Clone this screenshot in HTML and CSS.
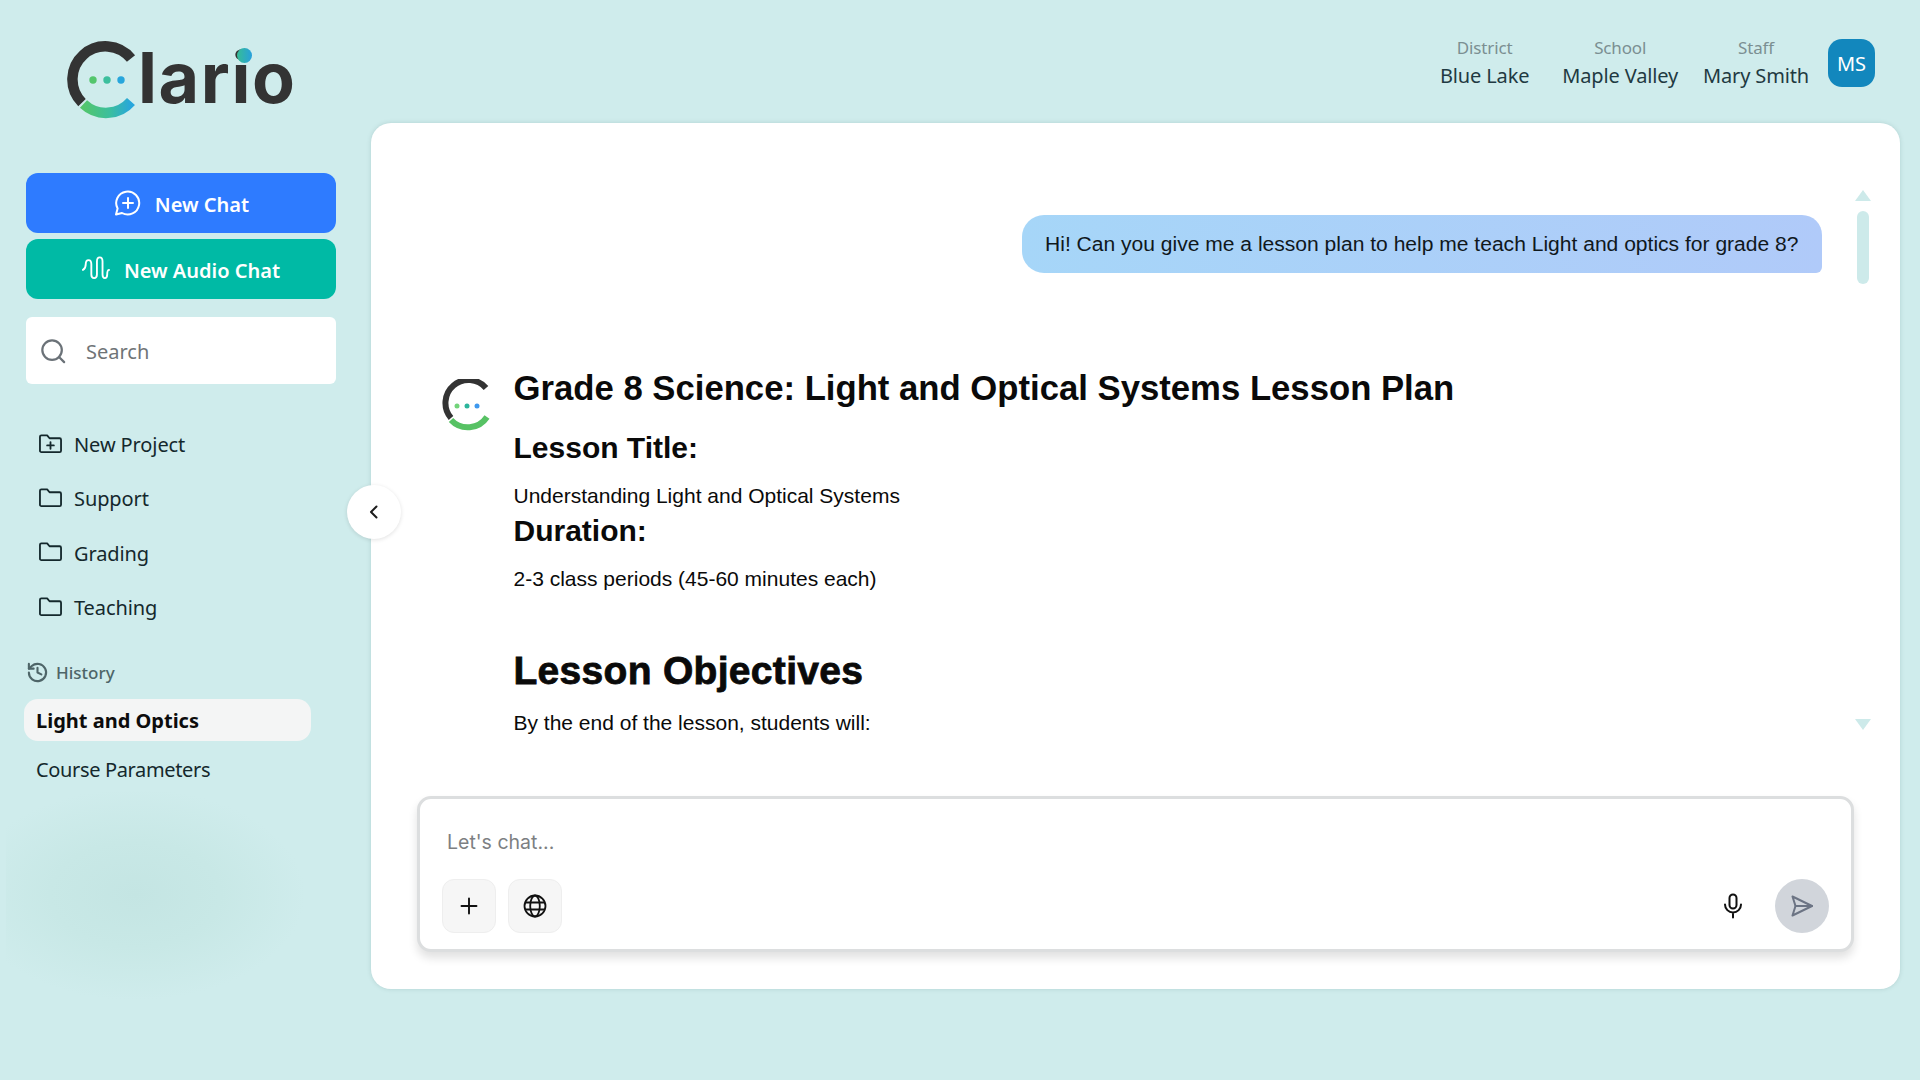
FILE: index.html
```html
<!DOCTYPE html>
<html lang="en">
<head>
    <meta charset="UTF-8">
    <meta name="viewport" content="width=device-width, initial-scale=1.0">
    <title>Clario</title>
    <link rel="stylesheet" href="styles.css">
</head>
<body>
    <aside class="sidebar">
        <div class="brand">
            <svg class="brand-mark" viewBox="0 0 80 80" aria-hidden="true">
                <defs>
                    <linearGradient id="smile" x1="0" y1="0" x2="1" y2="0">
                        <stop offset="0" stop-color="#53c66c"/>
                        <stop offset="0.55" stop-color="#3cbf9d"/>
                        <stop offset="1" stop-color="#28a6dc"/>
                    </linearGradient>
                </defs>
                <path d="M71 18.500A33 33 0 1 0 22 62.600" fill="none" stroke="#333" stroke-width="10.500"/>
                <path d="M23.500 64A33 33 0 0 0 71 61.500" fill="none" stroke="url(#smile)" stroke-width="10.500"/>
                <circle cx="33" cy="40" r="3.700" fill="#53c66c"/>
                <circle cx="47" cy="40" r="3.700" fill="#3cbf9d"/>
                <circle cx="61" cy="40" r="3.700" fill="#28a6dc"/>
            </svg>
            <span class="brand-name">lario<i class="brand-dot"></i></span>
        </div>

        <button class="action action-blue">
            <svg class="action-icon" viewBox="0 0 28 28" fill="none" stroke="#fff" stroke-width="2" stroke-linecap="round" stroke-linejoin="round"><path d="M3 25.500l1.600-6A11.500 11.500 0 1 1 9 24z"/><path d="M15 9v10M10 14h10"/></svg>
            New Chat
        </button>
        <button class="action action-green">
            <svg class="action-icon" viewBox="0 0 30 30" fill="none" stroke="#fff" stroke-width="2" stroke-linecap="round" stroke-linejoin="round"><path d="M1 16c2-1 3-3 3-6 0-6 6-6 6 0v11c0 5 6 5 6 0V7c0-6 6-6 6 0v14c0 5 5 5 5 0 0-3 1-5 2-5"/></svg>
            New Audio Chat
        </button>

        <div class="search">
            <svg class="search-icon" viewBox="0 0 28 28" fill="none" stroke="#6b7278" stroke-width="2.400" stroke-linecap="round"><circle cx="13" cy="13" r="10.500"/><path d="M20.500 20.500l5.500 5.500"/></svg>
            <span>Search</span>
        </div>

        <nav class="projects">
            <a class="project">
                <svg class="folder" viewBox="0 0 24 20" fill="none" stroke="#14282c" stroke-width="1.900" stroke-linejoin="round" stroke-linecap="round"><path d="M1 2.500A1.500 1.500 0 0 1 2.500 1h6l2.500 3h10.500A1.500 1.500 0 0 1 23 5.500V17a1.500 1.500 0 0 1-1.500 1.500h-19A1.500 1.500 0 0 1 1 17z"/><path d="M12 8v7M8.500 11.500h7"/></svg>
                New Project
            </a>
            <a class="project">
                <svg class="folder" viewBox="0 0 24 20" fill="none" stroke="#14282c" stroke-width="1.900" stroke-linejoin="round"><path d="M1 2.500A1.500 1.500 0 0 1 2.500 1h6l2.500 3h10.500A1.500 1.500 0 0 1 23 5.500V17a1.500 1.500 0 0 1-1.500 1.500h-19A1.500 1.500 0 0 1 1 17z"/></svg>
                Support
            </a>
            <a class="project">
                <svg class="folder" viewBox="0 0 24 20" fill="none" stroke="#14282c" stroke-width="1.900" stroke-linejoin="round"><path d="M1 2.500A1.500 1.500 0 0 1 2.500 1h6l2.500 3h10.500A1.500 1.500 0 0 1 23 5.500V17a1.500 1.500 0 0 1-1.500 1.500h-19A1.500 1.500 0 0 1 1 17z"/></svg>
                Grading
            </a>
            <a class="project">
                <svg class="folder" viewBox="0 0 24 20" fill="none" stroke="#14282c" stroke-width="1.900" stroke-linejoin="round"><path d="M1 2.500A1.500 1.500 0 0 1 2.500 1h6l2.500 3h10.500A1.500 1.500 0 0 1 23 5.500V17a1.500 1.500 0 0 1-1.500 1.500h-19A1.500 1.500 0 0 1 1 17z"/></svg>
                Teaching
            </a>
        </nav>

        <div class="history-label">
            <svg class="history-icon" viewBox="0 0 24 24" fill="none" stroke="#4e6568" stroke-width="2.200" stroke-linecap="round" stroke-linejoin="round"><path d="M3 12a9 9 0 1 0 3-6.700L3 8"/><path d="M3 3v5h5"/><path d="M12 7v5l4 2"/></svg>
            History
        </div>
        <a class="history-item is-active">Light and Optics</a>
        <a class="history-item">Course Parameters</a>
        <div class="smudge"></div>
    </aside>

    <main class="main">
        <header class="topbar">
            <div class="info"><span class="info-label">District</span><span class="info-value">Blue Lake</span></div>
            <div class="info"><span class="info-label">School</span><span class="info-value">Maple Valley</span></div>
            <div class="info"><span class="info-label">Staff</span><span class="info-value">Mary Smith</span></div>
            <div class="avatar">MS</div>
        </header>

        <section class="panel">
            <button class="collapse">
                <svg viewBox="0 0 16 16" width="16" height="16" fill="none" stroke="#1c1c1c" stroke-width="2" stroke-linecap="round" stroke-linejoin="round"><path d="M10.500 2.500L5 8l5.500 5.500"/></svg>
            </button>

            <div class="thread-wrap">
                <div class="thread">
                    <div class="bubble">Hi! Can you give me a lesson plan to help me teach Light and optics for grade 8?</div>
                    <div class="answer">
                        <svg class="answer-logo" viewBox="0 0 54 54" aria-hidden="true">
                            <path d="M46 9A23 23 0 1 0 11 39" fill="none" stroke="#333" stroke-width="6"/>
                            <path d="M11 41A23 23 0 0 0 47 38" fill="none" stroke="#57c264" stroke-width="6"/>
                            <circle cx="17" cy="27" r="2.500" fill="#72d47a"/>
                            <circle cx="27" cy="27" r="2.500" fill="#2cb59b"/>
                            <circle cx="37" cy="27" r="2.500" fill="#3e98ee"/>
                        </svg>
                        <div class="answer-body">
                            <h1>Grade 8 Science: Light and Optical Systems Lesson Plan</h1>
                            <h3>Lesson Title:</h3>
                            <p>Understanding Light and Optical Systems</p>
                            <h3 class="tight">Duration:</h3>
                            <p>2-3 class periods (45-60 minutes each)</p>
                            <h2>Lesson Objectives</h2>
                            <p>By the end of the lesson, students will:</p>
                        </div>
                    </div>
                </div>
                <div class="scroller">
                    <span class="arrow-up"></span>
                    <span class="thumb"></span>
                    <span class="arrow-down"></span>
                </div>
            </div>

            <div class="composer">
                <div class="placeholder">Let's chat...</div>
                <div class="composer-tools">
                    <button class="tool">
                        <svg viewBox="0 0 24 24" width="24" height="24" fill="none" stroke="#111" stroke-width="1.900" stroke-linecap="round"><path d="M12 4.500v15M4.500 12h15"/></svg>
                    </button>
                    <button class="tool">
                        <svg viewBox="0 0 24 24" width="24" height="24" fill="none" stroke="#111" stroke-width="1.800"><circle cx="12" cy="12" r="10.500"/><ellipse cx="12" cy="12" rx="4.800" ry="10.500"/><path d="M2 8.500h20M2 15.500h20"/></svg>
                    </button>
                    <span class="tools-gap"></span>
                    <svg class="mic" viewBox="0 0 20 26" width="20" height="26" fill="none" stroke="#111" stroke-width="2" stroke-linecap="round"><rect x="6.500" y="1.500" width="7" height="14" rx="3.500"/><path d="M2 11.500a8 8 0 0 0 16 0M10 19.500v5"/></svg>
                    <button class="send">
                        <svg viewBox="0 0 24 24" width="24" height="24" fill="none" stroke="#6c7484" stroke-width="2" stroke-linejoin="round" stroke-linecap="round"><path d="M2.500 2.500L22 12 2.500 21.500 5.500 12z"/><path d="M5.500 12H22"/></svg>
                    </button>
                </div>
            </div>
        </section>
    </main>
</body>
</html>
```

FILE: styles.css
```css
* {
    box-sizing: border-box;
}
body {
    margin: 0;
    height: 1080px;
    overflow: hidden;
    display: flex;
    background: #cfecec;
    font-family: "Noto Sans", Arial, sans-serif;
    color: #14282c;
}
button {
    border: none;
    font-family: inherit;
    padding: 0;
}

/* sidebar */
.sidebar {
    width: 371px;
    flex-shrink: 0;
    padding: 0 35px 0 26px;
}
.brand {
    height: 173px;
    display: flex;
    align-items: flex-start;
    padding: 40px 0 0 34px;
}
.brand-mark {
    width: 80px;
    height: 80px;
    flex-shrink: 0;
}
.brand-name {
    position: relative;
    margin: 3px 0 0 -2px;
    font-family: Inter, sans-serif;
    font-weight: 700;
    font-size: 70px;
    line-height: 70px;
    letter-spacing: 1.6px;
    color: #333;
}
.brand-dot {
    position: absolute;
    left: 99px;
    top: 5px;
    width: 15px;
    height: 15px;
    border-radius: 50%;
    background: linear-gradient(90deg, #36bd95, #28a0dc);
}
.action {
    width: 310px;
    height: 60px;
    margin-bottom: 6px;
    padding-top: 2px;
    display: flex;
    align-items: center;
    justify-content: center;
    gap: 14px;
    border-radius: 12px;
    color: #fff;
    font-size: 20px;
    font-weight: 600;
}
.action-blue {
    background: #2e7bff;
}
.action-green {
    background: #00baa5;
}
.action-icon {
    width: 28px;
    height: 28px;
    margin-top: -2px;
}
.search {
    width: 310px;
    height: 67px;
    margin-top: 18px;
    padding: 2px 0 0 14px;
    display: flex;
    align-items: center;
    gap: 20px;
    background: #fff;
    border-radius: 6px;
    color: #6f7477;
    font-size: 20px;
}
.search-icon {
    width: 26px;
    height: 26px;
    margin-top: -2px;
}
.projects {
    margin-top: 34px;
}
.project {
    height: 54.3px;
    display: flex;
    align-items: center;
    gap: 12px;
    padding-left: 13px;
    font-size: 20px;
    letter-spacing: -0.1px;
    line-height: 54px;
}
.folder {
    width: 23px;
    height: 20px;
    margin-bottom: 3px;
}
.history-label {
    margin-top: 22px;
    height: 30px;
    display: flex;
    align-items: center;
    gap: 7px;
    font-size: 17px;
    font-weight: 500;
    color: #4e6568;
}
.history-icon {
    width: 23px;
    height: 23px;
}
.history-item {
    display: block;
    width: 287px;
    height: 42px;
    margin-top: 8px;
    margin-left: -2px;
    padding-left: 12px;
    font-size: 20px;
    letter-spacing: -0.35px;
    line-height: 42px;
    border-radius: 14px;
}
.is-active {
    margin-top: 12px;
    padding-top: 1px;
    background: #f4f5f5;
    font-weight: 700;
    letter-spacing: 0;
    color: #0c0c0c;
}
.smudge {
    width: 340px;
    height: 230px;
    margin: 0 0 0 -20px;
    background: radial-gradient(ellipse 50% 46% at 38% 45%, #c4e5e3 0%, #c8e8e6 50%, rgba(207, 236, 236, 0) 100%);
}

/* header */
.main {
    width: 1529px;
}
.topbar {
    height: 123px;
    display: flex;
    justify-content: flex-end;
    align-items: flex-start;
    padding: 37px 25px 0 0;
}
.info {
    display: flex;
    flex-direction: column;
    align-items: center;
    margin-right: 33px;
    font-size: 20px;
    letter-spacing: -0.15px;
}
.info:nth-child(2) {
    margin-right: 25px;
}
.info:nth-child(3) {
    margin-right: 19px;
}
.info-label {
    font-size: 17px;
    line-height: 21px;
    color: #7b8f92;
}
.info-value {
    line-height: 35px;
    color: #1f3a42;
}
.avatar {
    width: 47px;
    height: 48px;
    margin-top: 2px;
    display: flex;
    align-items: center;
    justify-content: center;
    border-radius: 14px;
    background: #1287bd;
    color: #fff;
    font-size: 20px;
}

/* chat panel */
.panel {
    position: relative;
    width: 1529px;
    height: 866px;
    background: #fff;
    border-radius: 20px;
    box-shadow: 0 0 4px rgba(90, 130, 130, 0.25);
}
.collapse {
    position: absolute;
    left: -24px;
    top: 362px;
    width: 54px;
    height: 54px;
    display: flex;
    align-items: center;
    justify-content: center;
    border-radius: 50%;
    background: #fff;
    box-shadow: 0 1px 4px rgba(0, 0, 0, 0.12);
}
.thread-wrap {
    height: 673px;
    display: flex;
    justify-content: space-between;
    overflow: hidden;
}
.thread {
    flex: 1;
    padding-top: 92px;
}
.bubble {
    width: 800px;
    height: 58px;
    margin-left: 651px;
    padding-left: 23px;
    background: linear-gradient(90deg, #a6d6f8, #b0caf9);
    border-radius: 22px 20px 6px 22px;
    font-family: "Liberation Sans", Arial, sans-serif;
    font-size: 21.06px;
    line-height: 58px;
    color: #10181c;
}
.answer {
    display: flex;
    margin: 91px 0 0 69px;
    font-family: "Liberation Sans", Arial, sans-serif;
    color: #0a0a0a;
}
.answer-logo {
    width: 54px;
    height: 54px;
    margin-top: 15px;
    flex-shrink: 0;
}
.answer-body {
    margin-left: 19.5px;
}
.answer-body h1 {
    margin: 0;
    font-size: 34.7px;
    line-height: 48px;
}
.answer-body h3 {
    margin: 16px 0 0;
    font-size: 30px;
    line-height: 40px;
}
.answer-body h3.tight {
    margin-top: 3px;
}
.answer-body p {
    margin: 16px 0 0;
    font-size: 21px;
    line-height: 24px;
}
.answer-body h2 {
    margin: 57px 0 0;
    font-size: 39px;
    line-height: 46px;
    letter-spacing: 0.3px;
    -webkit-text-stroke: 0.8px #0a0a0a;
}
.answer-body h2 + p {
    margin-top: 17px;
}
.scroller {
    width: 16px;
    margin: 67px 29px 0 0;
    display: flex;
    flex-direction: column;
    align-items: center;
}
.arrow-up,
.arrow-down {
    width: 0;
    height: 0;
    border-left: 8px solid transparent;
    border-right: 8px solid transparent;
}
.arrow-up {
    border-bottom: 11px solid #cdeaea;
}
.thumb {
    width: 12px;
    height: 73px;
    margin-top: 10px;
    border-radius: 6px;
    background: #cdeaea;
}
.arrow-down {
    margin-top: 435px;
    border-top: 11px solid #cdeaea;
}

/* composer */
.composer {
    width: 1437px;
    height: 156px;
    margin-left: 46px;
    padding: 0 22px;
    background: #fff;
    border: 3px solid #dcdedf;
    border-radius: 14px;
    box-shadow: 0 6px 10px rgba(0, 0, 0, 0.12);
}
.placeholder {
    padding: 31px 0 0 5px;
    height: 80px;
    font-family: Inter, sans-serif;
    font-size: 19.5px;
    line-height: 24px;
    color: #7d7f82;
}
.composer-tools {
    display: flex;
    align-items: center;
}
.tool {
    width: 54px;
    height: 54px;
    margin-right: 12px;
    display: flex;
    align-items: center;
    justify-content: center;
    background: #f6f6f6;
    border: 1px solid #eeeeee;
    border-radius: 12px;
}
.tools-gap {
    flex: 1;
}
.mic {
    margin-right: 32px;
}
.send {
    width: 54px;
    height: 54px;
    display: flex;
    align-items: center;
    justify-content: center;
    border-radius: 50%;
    background: #d1d5db;
}
```
